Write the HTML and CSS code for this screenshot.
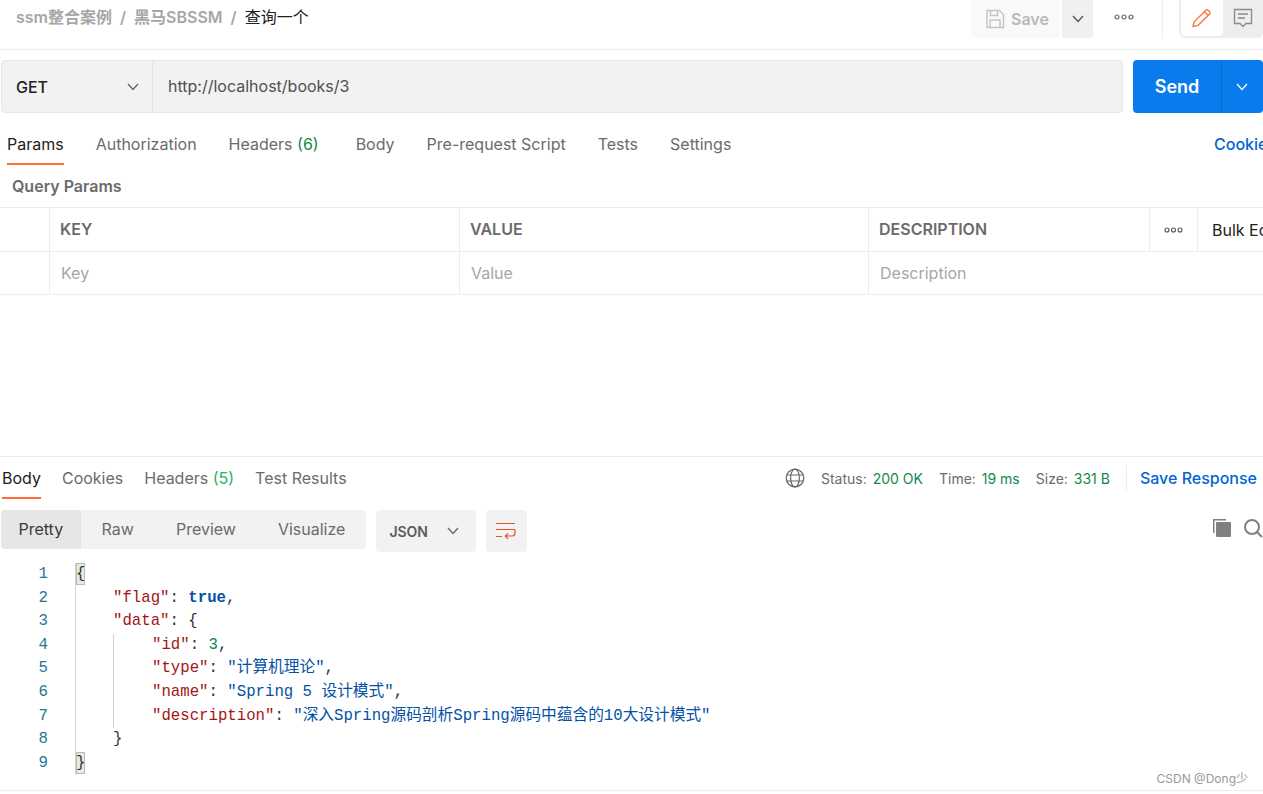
FILE: index.html
```html
<!DOCTYPE html>
<html lang="en">
<head>
  <meta charset="UTF-8" />
  <title>查询一个</title>
  <link rel="stylesheet" href="styles.css">
</head>
<body>
  <div class="page">
    <!-- Top bar -->
    <div class="top-bar">
      <div class="crumbs">
        <span>ssm整合案例</span><span class="slash">/</span><span>黑马SBSSM</span><span class="slash">/</span><span class="crumb-now">查询一个</span>
      </div>
      <div class="top-actions">
        <div class="save-btn">
          <svg width="20" height="20" viewBox="0 0 20 20" fill="none" stroke="#c4c4c4" stroke-width="1.4"><path d="M2 1.5h12.5l4 4v13H2z"/><path d="M5.5 1.5v5h7v-5M5 18.5v-7.5h10v7.5"/></svg>
          <span>Save</span>
        </div>
        <div class="save-more">
          <svg width="12" height="8" viewBox="0 0 12 8" fill="none" stroke="#555" stroke-width="1.4"><path d="M1 1l5 5.5L11 1"/></svg>
        </div>
        <svg class="dots" width="20" height="6" viewBox="0 0 20 6" fill="none" stroke="#666" stroke-width="1.2"><circle cx="3" cy="3" r="2"/><circle cx="10" cy="3" r="2"/><circle cx="17" cy="3" r="2"/></svg>
        <div class="top-divider"></div>
        <div class="side-toggle">
          <div class="toggle-on">
            <svg width="20" height="20" viewBox="0 0 20 20" fill="none" stroke="#ff6c37" stroke-width="1.3"><path d="M1 18.5l1.2-4.7L13.8 2.2a1.6 1.6 0 0 1 2.3 0l1.5 1.5a1.6 1.6 0 0 1 0 2.3L6 17.5z"/><path d="M12.5 3.8l3.8 3.6"/></svg>
          </div>
          <div class="toggle-off">
            <svg width="20" height="20" viewBox="0 0 20 20" fill="none" stroke="#8a8a8a" stroke-width="1.3"><path d="M1.5 1.5h17v14h-5.5L10 18.5 7 15.5H1.5z"/><path d="M5 6h10M5 10h7"/></svg>
          </div>
        </div>
      </div>
    </div>

    <!-- Request line -->
    <div class="request-row">
      <div class="request-input">
        <div class="method">
          <span>GET</span>
          <svg width="12" height="8" viewBox="0 0 12 8" fill="none" stroke="#666" stroke-width="1.3"><path d="M1 1l5 5.5L11 1"/></svg>
        </div>
        <div class="url">http://localhost/books/3</div>
      </div>
      <div class="send-btn">
        <div class="send-label">Send</div>
        <div class="send-more">
          <svg width="12" height="8" viewBox="0 0 12 8" fill="none" stroke="#fff" stroke-width="1.3"><path d="M1 1l5 5.5L11 1"/></svg>
        </div>
      </div>
    </div>

    <!-- Request tabs -->
    <div class="tabs req-tabs">
      <span class="tab active">Params</span>
      <span class="tab">Authorization</span>
      <span class="tab tab-wide">Headers <em class="count">(6)</em></span>
      <span class="tab">Body</span>
      <span class="tab">Pre-request Script</span>
      <span class="tab">Tests</span>
      <span class="tab">Settings</span>
      <span class="cookies-link">Cookies</span>
    </div>

    <h4 class="query-title">Query Params</h4>

    <div class="param-table">
      <div class="cell"></div>
      <div class="cell head">KEY</div>
      <div class="cell head">VALUE</div>
      <div class="cell head">DESCRIPTION</div>
      <div class="cell center">
        <svg width="19" height="6" viewBox="0 0 19 6" fill="none" stroke="#555" stroke-width="1.1"><circle cx="3" cy="3" r="2"/><circle cx="9.5" cy="3" r="2"/><circle cx="16" cy="3" r="2"/></svg>
      </div>
      <div class="cell bulk">Bulk Edit</div>

      <div class="cell"></div>
      <div class="cell hint">Key</div>
      <div class="cell hint">Value</div>
      <div class="cell hint span-rest">Description</div>
    </div>

    <!-- Response -->
    <div class="response">
      <div class="tabs res-tabs">
        <span class="tab active">Body</span>
        <span class="tab">Cookies</span>
        <span class="tab">Headers <em class="count light">(5)</em></span>
        <span class="tab">Test Results</span>
        <div class="res-meta">
          <svg class="globe" width="20" height="20" viewBox="0 0 20 20" fill="none" stroke="#666" stroke-width="1.2"><circle cx="10" cy="10" r="8.8"/><ellipse cx="10" cy="10" rx="4.4" ry="8.8"/><path d="M1.6 7h16.8M1.6 13h16.8"/></svg>
          <span class="stat">Status: <b>200 OK</b></span>
          <span class="stat">Time: <b>19 ms</b></span>
          <span class="stat">Size: <b>331 B</b></span>
          <span class="meta-divider"></span>
          <span class="save-response">Save Response</span>
          <svg width="12" height="8" viewBox="0 0 12 8" fill="none" stroke="#0265d2" stroke-width="1.3"><path d="M1 1l5 5.5L11 1"/></svg>
        </div>
      </div>

      <div class="res-tools">
        <div class="segments">
          <span class="seg seg-on">Pretty</span>
          <span class="seg">Raw</span>
          <span class="seg">Preview</span>
          <span class="seg">Visualize</span>
        </div>
        <div class="format">
          <span>JSON</span>
          <svg width="12" height="8" viewBox="0 0 12 8" fill="none" stroke="#666" stroke-width="1.3"><path d="M1 1l5 5.5L11 1"/></svg>
        </div>
        <div class="wrap-btn">
          <svg width="20" height="18" viewBox="0 0 20 18" fill="none" stroke="#e0562a" stroke-width="1.2"><path d="M0 1.5h19M0 7.5h19a0 0 0 0 1 0 0M0 14.5h6"/><path d="M19 7.5v3.5a3 3 0 0 1-3 3H9.5M12 11.5l-2.7 2.6 2.7 2.6"/></svg>
        </div>
        <div class="res-icons">
          <svg width="20" height="20" viewBox="0 0 20 20"><path d="M1 1h13v1.5H2.5V15H1z" fill="#808080"/><rect x="4" y="4" width="15" height="15" rx="1" fill="#808080"/></svg>
          <svg width="20" height="20" viewBox="0 0 20 20" fill="none" stroke="#808080" stroke-width="2"><circle cx="9" cy="9" r="7"/><path d="M14 14l5 5"/></svg>
        </div>
      </div>

      <div class="code">
        <div class="gutter">
          <div>1</div><div>2</div><div>3</div><div>4</div><div>5</div><div>6</div><div>7</div><div>8</div><div>9</div>
        </div>
        <div class="code-body">
          <div class="ln"><span class="brace">{</span></div>
          <div class="ln lv1"><i class="key">"flag"</i>: <b class="bool">true</b>,</div>
          <div class="ln lv1"><i class="key">"data"</i>: {</div>
          <div class="fold">
            <div class="ln"><i class="key">"id"</i>: <i class="num">3</i>,</div>
            <div class="ln"><i class="key">"type"</i>: <i class="str">"计算机理论"</i>,</div>
            <div class="ln"><i class="key">"name"</i>: <i class="str">"Spring 5 设计模式"</i>,</div>
            <div class="ln"><i class="key">"description"</i>: <i class="str">"深入Spring源码剖析Spring源码中蕴含的10大设计模式"</i></div>
          </div>
          <div class="ln lv1">}</div>
          <div class="ln"><span class="brace">}</span></div>
        </div>
      </div>
    </div>

    <div class="watermark">CSDN @Dong少</div>
  </div>
</body>
</html>
```

FILE: styles.css
```css
body {
  margin: 0;
  background: #fff;
  font-family: Inter, "Noto Sans CJK SC", sans-serif;
  color: #6b6b6b;
}

.page {
  position: relative;
  width: 1263px;
  height: 794px;
  overflow: hidden;
  box-sizing: border-box;
  border-bottom: 1px solid #fff;
}

/* Top bar */
.top-bar {
  display: flex;
  justify-content: space-between;
  height: 49px;
  border-bottom: 1px solid #ededed;
}

.crumbs {
  display: flex;
  padding: 6px 0 0 16px;
  font-size: 16px;
  line-height: 22px;
  font-weight: 600;
  color: #a6a6a6;
  white-space: nowrap;
}

.slash {
  margin: 0 8px;
}

.crumb-now {
  color: #212121;
  font-weight: 400;
}

.top-actions {
  display: flex;
  align-items: flex-start;
  width: 292px;
  flex: none;
}

.save-btn {
  display: flex;
  align-items: center;
  gap: 6px;
  width: 89px;
  height: 38px;
  box-sizing: border-box;
  padding-left: 14px;
  background: #f9f9f9;
  border-radius: 0 0 4px 4px;
  font-size: 16px;
  font-weight: 600;
  color: #b8b8b8;
}

.save-more {
  display: flex;
  align-items: center;
  justify-content: center;
  width: 31px;
  height: 38px;
  margin-left: 2px;
  background: #f0f0f0;
  border-radius: 0 0 4px 0;
}

.dots {
  margin: 14px 0 0 21px;
}

.top-divider {
  width: 1px;
  height: 38px;
  margin-left: 28px;
  background: #ededed;
}

.side-toggle {
  display: flex;
  width: 84px;
  height: 38px;
  box-sizing: border-box;
  margin-left: 16px;
  padding: 0 0 2px 2px;
  background: #ededed;
  border-radius: 0 0 6px 6px;
}

.toggle-on {
  display: flex;
  align-items: center;
  justify-content: center;
  width: 42px;
  background: #fff;
  border-radius: 0 0 4px 4px;
}

.toggle-off {
  display: flex;
  align-items: center;
  justify-content: center;
  width: 40px;
}

/* Request line */
.request-row {
  display: flex;
  gap: 10px;
  height: 53px;
  margin: 10px 0 0 1px;
}

.request-input {
  display: flex;
  width: 1139px;
  box-sizing: border-box;
  background: #f2f2f2;
  border: 1px solid #e6e6e6;
  border-radius: 4px;
}

.method {
  display: flex;
  align-items: center;
  justify-content: space-between;
  width: 151px;
  box-sizing: border-box;
  padding: 0 13px 0 14px;
  border-right: 1px solid #e6e6e6;
  font-size: 16px;
  font-weight: 500;
  color: #212121;
}

.url {
  display: flex;
  align-items: center;
  padding: 0 0 2px 15px;
  font-size: 16px;
  color: #505050;
}

.send-btn {
  display: flex;
  flex: none;
  width: 130px;
  background: #097bed;
  border-radius: 4px;
  color: #fff;
}

.send-label {
  display: flex;
  align-items: center;
  justify-content: center;
  width: 88px;
  border-right: 1px solid #0a6ccf;
  font-size: 18px;
  font-weight: 600;
}

.send-more {
  display: flex;
  align-items: center;
  padding-left: 14px;
}

/* Tabs */
.tabs {
  display: flex;
  white-space: nowrap;
  font-size: 16px;
}

.tab {
  display: block;
  box-sizing: border-box;
  color: #6b6b6b;
  border-bottom: 2px solid transparent;
}

.tab.active {
  color: #212121;
  border-bottom-color: #ff6c37;
}

.count {
  font-style: normal;
  color: #0f8a48;
}

.count.light {
  color: #26b466;
}

.req-tabs {
  gap: 32px;
  height: 52px;
  padding: 21px 0 0 7px;
  box-sizing: border-box;
}

.req-tabs .tab {
  height: 31px;
  line-height: 20px;
}

.tab-wide {
  margin-right: 5px;
}

.cookies-link {
  margin-left: auto;
  width: 49px;
  overflow: hidden;
  line-height: 20px;
  font-weight: 500;
  color: #0265d2;
}

.query-title {
  margin: 0;
  height: 42px;
  padding: 11px 0 0 12px;
  box-sizing: border-box;
  font-size: 16px;
  line-height: 20px;
  font-weight: 600;
  color: #6b6b6b;
}

/* Params table */
.param-table {
  display: grid;
  grid-template-columns: 50px 410px 409px 281px 48px 90px;
  grid-template-rows: 44px 43px;
  width: 1288px;
  border-top: 1px solid #ededed;
}

.cell {
  display: flex;
  align-items: center;
  box-sizing: border-box;
  padding-left: 10px;
  border-right: 1px solid #ededed;
  border-bottom: 1px solid #ededed;
  font-size: 16px;
  white-space: nowrap;
  overflow: hidden;
}

.head {
  font-weight: 600;
  color: #6b6b6b;
  padding-bottom: 2px;
}

.center {
  justify-content: center;
  padding-left: 0;
}

.bulk {
  padding-left: 14px;
  color: #212121;
  border-right: 0;
}

.hint {
  padding-left: 11px;
  color: #a6a6a6;
}

.span-rest {
  grid-column: 4 / 7;
  border-right: 0;
}

/* Response */
.response {
  margin-top: 161px;
  border-top: 1px solid #ededed;
}

.res-tabs {
  align-items: flex-start;
  gap: 21px;
  height: 42px;
  padding: 11px 0 0 2px;
  box-sizing: border-box;
}

.res-tabs .tab {
  height: 31px;
  line-height: 20px;
}

.res-meta {
  display: flex;
  align-items: center;
  margin-left: auto;
  height: 20px;
  margin-right: -16px;
  font-size: 14px;
}

.globe {
  margin-right: 16px;
}

.stat {
  margin-right: 16px;
  color: #6b6b6b;
}

.stat b {
  font-weight: 400;
  color: #0f8a48;
  margin-left: 2px;
}

.meta-divider {
  width: 1px;
  height: 26px;
  margin-right: 13px;
  background: #ededed;
}

.save-response {
  margin-right: 10px;
  font-size: 16px;
  font-weight: 500;
  color: #0265d2;
}

.res-tools {
  display: flex;
  align-items: flex-start;
  height: 53px;
  margin: 11px 0 0 1px;
}

.segments {
  display: flex;
  width: 370px;
  height: 39px;
  background: #f2f2f2;
  border-radius: 4px;
  overflow: hidden;
  font-size: 16px;
  line-height: 39px;
}

.seg {
  padding: 0 21px;
  color: #6b6b6b;
}

.seg-on {
  width: 87px;
  box-sizing: border-box;
  text-align: center;
  padding: 0;
  background: #e6e6e6;
  color: #3a3a3a;
}

.format {
  display: flex;
  align-items: center;
  justify-content: space-between;
  width: 100px;
  height: 42px;
  box-sizing: border-box;
  margin-left: 10px;
  padding: 0 17px 0 13px;
  background: #f2f2f2;
  border-radius: 4px;
  font-size: 14px;
  font-weight: 600;
  color: #5c5c5c;
}

.wrap-btn {
  display: flex;
  align-items: center;
  justify-content: center;
  width: 42px;
  height: 42px;
  margin-left: 10px;
  background: #f2f2f2;
  border-radius: 4px;
}

.res-icons {
  display: flex;
  gap: 11px;
  margin: 8px 0 0 685px;
}

/* Code */
.code {
  display: flex;
  font-family: "Liberation Mono", "Noto Sans CJK SC", monospace;
  font-size: 15.7px;
  line-height: 23.6px;
  color: #333;
  white-space: nowrap;
}

.code i {
  font-style: normal;
}

.gutter {
  width: 48px;
  margin-right: 27px;
  text-align: right;
  color: #237893;
}

.code-body {
  border-left: 1px solid #d3d3d3;
}

.lv1 {
  padding-left: 37px;
}

.fold {
  margin-left: 37px;
  padding-left: 38px;
  border-left: 1px solid #d3d3d3;
}

.key {
  color: #a31515;
}

.str {
  color: #0451a5;
}

.num {
  color: #098658;
}

.bool {
  color: #0451a5;
  font-weight: 700;
}

.brace {
  display: inline-block;
  height: 22px;
  line-height: 22px;
  box-sizing: border-box;
  background: #e8ebe4;
  outline: 1px solid #b9b9b9;
  outline-offset: -1px;
}

.watermark {
  position: absolute;
  right: 15px;
  top: 769px;
  font-family: Inter, "Noto Sans CJK SC", sans-serif;
  font-size: 12px;
  color: #999;
}

.page::after {
  content: "";
  position: absolute;
  left: 0;
  right: 0;
  top: 790px;
  height: 1px;
  background: #ededed;
}
```
